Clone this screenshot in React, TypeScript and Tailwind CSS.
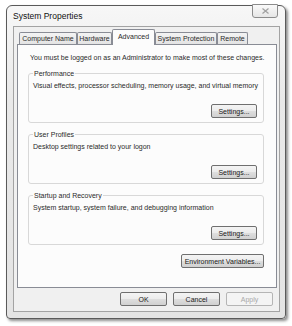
import React from "react";

const font = { fontFamily: '"Liberation Sans", Arial, sans-serif' };

function Button({ label, width, disabled }: { label: string; width: string; disabled?: boolean }) {
  return (
    <div
      className={`${width} h-[14px] flex items-center justify-center rounded-[2px] border text-[7px] leading-none ${
        disabled
          ? "border-[#b5b5b5] text-[#a8a8a8] bg-[#f4f4f4]"
          : "border-[#6f6f6f] text-[#1a1a1a] bg-[linear-gradient(#f4f4f4,#ececec_48%,#dedede_52%,#d0d0d0)]"
      }`}
    >
      {label}
    </div>
  );
}

function Group({ title, text }: { title: string; text: string }) {
  return (
    <div className="w-[236px] h-[50px] ml-[10px] flex flex-col border border-[#d8d8d8] rounded-[3px]">
      <span className="-mt-[5px] ml-[4px] self-start px-[1px] h-[9px] leading-[9px] bg-[#fcfcfc] text-[7px] text-[#2a2a2a]">
        {title}
      </span>
      <div className="mt-[3px] ml-[4px] h-[9px] leading-[9px] text-[7px] text-[#2a2a2a]">{text}</div>
      <div className="mt-auto mb-[4px] mr-[6px] self-end">
        <Button label="Settings..." width="w-[46px]" />
      </div>
    </div>
  );
}

const tabs = [
  { label: "Computer Name", w: "w-[58px]" },
  { label: "Hardware", w: "w-[35px]" },
  { label: "Advanced", w: "w-[43px]", active: true },
  { label: "System Protection", w: "w-[62px]" },
  { label: "Remote", w: "w-[31px]" },
];

export default function App() {
  return (
    <div className="w-[292px] h-[326px] bg-white overflow-hidden pt-[5px]" style={font}>
      <div className="relative ml-[6px] w-[280px] h-[314px] flex flex-col border border-[#5a5a5a] rounded-t-[6px] rounded-b-[4px] bg-[linear-gradient(#f7f7f7,#e9e9e9_30%,#e4e4e4)] shadow-[2px_2px_3px_rgba(0,0,0,0.45)]">
        <div className="h-[20px] flex items-center pl-[6px] text-[8.5px] text-[#111]">System Properties</div>
        <div className="absolute -top-[2px] right-[7px] w-[26px] h-[14px] flex items-center justify-center border border-[#8c8c8c] rounded-b-[3px] bg-[linear-gradient(#fafafa,#e6e6e6)]">
          <svg width="7" height="6" viewBox="0 0 7 6">
            <path d="M0.5 0.5 L6.5 5.5 M6.5 0.5 L0.5 5.5" stroke="#a0a0a0" strokeWidth="1.2" />
          </svg>
        </div>
        <div className="flex-1 ml-[6px] mr-[5px] mb-[6px] flex flex-col border border-[#a3a3a3] bg-[#f0f0f0]">
          <div className="h-[17px] pt-[2px] pl-[5px] flex items-end">
            {tabs.map((t) =>
              t.active ? (
                <div
                  key={t.label}
                  className={`${t.w} relative z-10 -mb-px h-[16px] flex items-start justify-center pt-[2px] border border-b-0 border-[#898c95] rounded-t-[2px] bg-[#fcfcfc] text-[7px] leading-[9px] text-[#2a2a2a]`}
                >
                  {t.label}
                </div>
              ) : (
                <div
                  key={t.label}
                  className={`${t.w} h-[12px] flex items-center justify-center border border-b-0 border-[#898c95] rounded-t-[2px] bg-[linear-gradient(#f4f4f4,#e3e3e3)] text-[7px] leading-none text-[#2a2a2a]`}
                >
                  {t.label}
                </div>
              )
            )}
          </div>
          <div className="ml-[3px] w-[260px] h-[244px] border border-[#898c95] bg-[#fcfcfc] flex flex-col">
            <div className="mt-[8px] ml-[12px] h-[9px] leading-[9px] text-[7px] text-[#2a2a2a]">
              You must be logged on as an Administrator to make most of these changes.
            </div>
            <div className="mt-[11px] flex flex-col gap-[11px]">
              <Group title="Performance" text="Visual effects, processor scheduling, memory usage, and virtual memory" />
              <Group title="User Profiles" text="Desktop settings related to your logon" />
              <Group title="Startup and Recovery" text="System startup, system failure, and debugging information" />
            </div>
            <div className="mt-[9px] ml-[163px]">
              <Button label="Environment Variables..." width="w-[83px]" />
            </div>
          </div>
          <div className="mt-[4px] pr-[6px] flex justify-end gap-[6px]">
            <Button label="OK" width="w-[47px]" />
            <Button label="Cancel" width="w-[47px]" />
            <Button label="Apply" width="w-[47px]" disabled />
          </div>
        </div>
      </div>
    </div>
  );
}
